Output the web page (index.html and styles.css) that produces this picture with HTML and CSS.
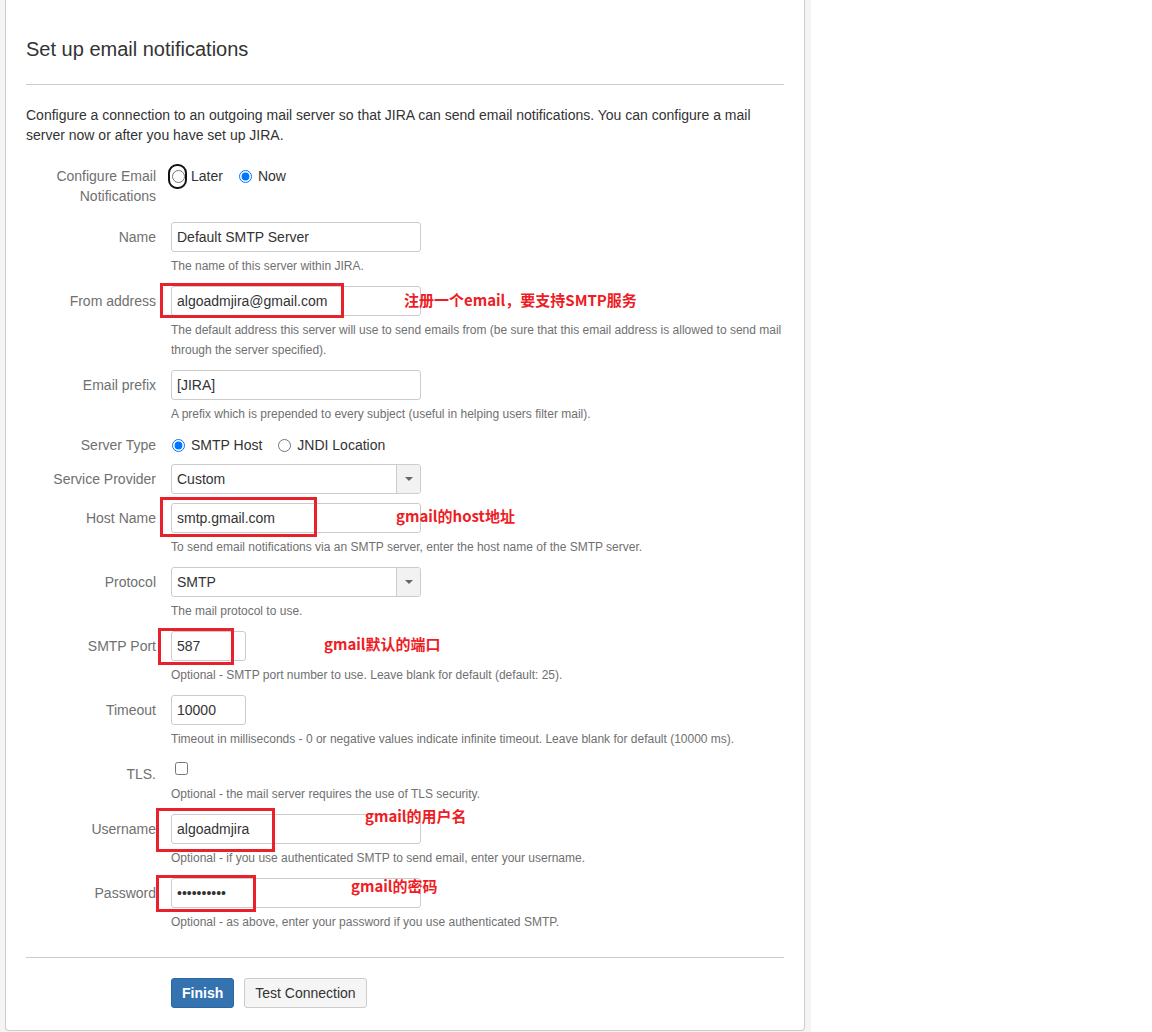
FILE: index.html
```html
<!DOCTYPE html>
<html lang="en">
<head>
<meta charset="utf-8">
<title>Set up email notifications</title>
<link rel="stylesheet" href="styles.css">
</head>
<body>
<div class="page">
  <div class="card">
    <h2 class="title">Set up email notifications</h2>
    <hr class="rule">
    <p class="intro">Configure a connection to an outgoing mail server so that JIRA can send email notifications. You can configure a mail server now or after you have set up JIRA.</p>

    <form class="form">
      <div class="row row-configure">
        <div class="lbl lbl-radio">Configure Email Notifications</div>
        <div class="field">
          <div class="radios">
            <label class="opt"><span class="focus-wrap"><input type="radio" name="cfg"><span class="focus-ring"></span></span>Later</label>
            <label class="opt"><input type="radio" name="cfg" checked>Now</label>
          </div>
        </div>
      </div>

      <div class="row">
        <div class="lbl">Name</div>
        <div class="field">
          <input class="text" type="text" value="Default SMTP Server">
          <div class="desc">The name of this server within JIRA.</div>
        </div>
      </div>

      <div class="row">
        <div class="lbl">From address</div>
        <div class="field">
          <input class="text" type="text" value="algoadmjira@gmail.com">
          <div class="desc">The default address this server will use to send emails from (be sure that this email address is allowed to send mail through the server specified).</div>
        </div>
      </div>

      <div class="row">
        <div class="lbl">Email prefix</div>
        <div class="field">
          <input class="text" type="text" value="[JIRA]">
          <div class="desc">A prefix which is prepended to every subject (useful in helping users filter mail).</div>
        </div>
      </div>

      <div class="row row-radio">
        <div class="lbl lbl-radio">Server Type</div>
        <div class="field">
          <div class="radios">
            <label class="opt"><input type="radio" name="stype" checked>SMTP Host</label>
            <label class="opt"><input type="radio" name="stype">JNDI Location</label>
          </div>
        </div>
      </div>

      <div class="row row-select">
        <div class="lbl">Service Provider</div>
        <div class="field">
          <div class="select"><span class="sel-text">Custom</span><span class="sel-arrow"><span class="caret"></span></span></div>
        </div>
      </div>

      <div class="row">
        <div class="lbl">Host Name</div>
        <div class="field">
          <input class="text" type="text" value="smtp.gmail.com">
          <div class="desc">To send email notifications via an SMTP server, enter the host name of the SMTP server.</div>
        </div>
      </div>

      <div class="row">
        <div class="lbl">Protocol</div>
        <div class="field">
          <div class="select"><span class="sel-text">SMTP</span><span class="sel-arrow"><span class="caret"></span></span></div>
          <div class="desc">The mail protocol to use.</div>
        </div>
      </div>

      <div class="row">
        <div class="lbl">SMTP Port</div>
        <div class="field">
          <input class="text short" type="text" value="587">
          <div class="desc">Optional - SMTP port number to use. Leave blank for default (default: 25).</div>
        </div>
      </div>

      <div class="row">
        <div class="lbl">Timeout</div>
        <div class="field">
          <input class="text short" type="text" value="10000">
          <div class="desc">Timeout in milliseconds - 0 or negative values indicate infinite timeout. Leave blank for default (10000 ms).</div>
        </div>
      </div>

      <div class="row">
        <div class="lbl">TLS.</div>
        <div class="field">
          <div class="check-wrap"><input class="check" type="checkbox"></div>
          <div class="desc">Optional - the mail server requires the use of TLS security.</div>
        </div>
      </div>

      <div class="row">
        <div class="lbl">Username</div>
        <div class="field">
          <input class="text" type="text" value="algoadmjira">
          <div class="desc">Optional - if you use authenticated SMTP to send email, enter your username.</div>
        </div>
      </div>

      <div class="row">
        <div class="lbl">Password</div>
        <div class="field">
          <input class="text" type="password" value="abcdefghij">
          <div class="desc">Optional - as above, enter your password if you use authenticated SMTP.</div>
        </div>
      </div>

      <hr class="rule rule-bottom">

      <div class="buttons">
        <button type="button" class="btn btn-primary">Finish</button>
        <button type="button" class="btn">Test Connection</button>
      </div>
    </form>

    <div class="mark mark-from"></div>
    <div class="mark mark-host"></div>
    <div class="mark mark-port"></div>
    <div class="mark mark-user"></div>
    <div class="mark mark-pass"></div>

    <div class="note note-from">注册一个email，要支持SMTP服务</div>
    <div class="note note-host">gmail的host地址</div>
    <div class="note note-port">gmail默认的端口</div>
    <div class="note note-user">gmail的用户名</div>
    <div class="note note-pass">gmail的密码</div>
  </div>
</div>
</body>
</html>
```

FILE: styles.css
```css
html, body {
  margin: 0;
  padding: 0;
  background: #ffffff;
}

body {
  font-family: "Liberation Sans", Arial, "Noto Sans CJK SC", sans-serif;
  font-size: 14px;
  line-height: 20px;
  color: #333333;
}

.page {
  width: 811px;
  height: 1032px;
  background: #f4f4f4;
  box-sizing: border-box;
  padding-left: 5px;
}

.card {
  position: relative;
  width: 800px;
  height: 1031px;
  box-sizing: border-box;
  background: #ffffff;
  border: 1px solid #cccccc;
  border-top: none;
  border-radius: 0 0 4px 4px;
  padding: 34px 20px 0 20px;
}

.title {
  margin: 0;
  font-size: 20px;
  font-weight: normal;
  line-height: 30px;
  color: #333333;
}

.rule {
  border: none;
  border-top: 1px solid #cccccc;
  margin: 20px 0 0 0;
  height: 0;
}

.intro {
  margin: 20px 0 0 0;
  padding-right: 20px;
}

.form {
  margin-top: 21px;
}

.row {
  display: grid;
  grid-template-columns: 130px 1fr;
  column-gap: 15px;
  margin-bottom: 10px;
}

.row-configure {
  margin-bottom: 16px;
}

.row-radio {
  padding-top: 1px;
  margin-bottom: 9px;
}

.row-select {
  margin-bottom: 9px;
}

.lbl {
  text-align: right;
  color: #707070;
  padding-top: 5px;
  line-height: 20px;
}

.lbl-radio {
  padding-top: 0;
}

.field {
  min-width: 0;
}

.radios {
  display: flex;
  align-items: center;
  height: 20px;
}

.opt {
  display: inline-flex;
  align-items: center;
  margin-right: 15px;
  color: #333333;
}

.opt input {
  margin: 0 6px 0 1px;
  width: 13px;
  height: 13px;
}

.focus-wrap {
  position: relative;
  display: inline-flex;
  align-items: center;
}

.focus-ring {
  position: absolute;
  left: -3px;
  top: -6px;
  width: 15px;
  height: 21px;
  border: 2px solid #111111;
  border-radius: 9px;
  pointer-events: none;
}

.text {
  display: block;
  width: 250px;
  height: 30px;
  box-sizing: border-box;
  border: 1px solid #cccccc;
  border-radius: 3px;
  padding: 0 5px;
  font-family: "Liberation Sans", Arial, sans-serif;
  font-size: 14px;
  color: #333333;
  background: #ffffff;
  margin: 0;
}

.text.short {
  width: 75px;
}

.desc {
  margin-top: 4px;
  font-size: 12px;
  line-height: 20px;
  color: #707070;
}

.select {
  display: flex;
  width: 250px;
  height: 30px;
  box-sizing: border-box;
  border: 1px solid #cccccc;
  border-radius: 3px;
  background: #ffffff;
  overflow: hidden;
}

.sel-text {
  flex: 1;
  padding: 0 5px;
  line-height: 28px;
  color: #333333;
}

.sel-arrow {
  width: 23px;
  border-left: 1px solid #cccccc;
  background: #f2f2f2;
  display: flex;
  align-items: center;
  justify-content: center;
}

.caret {
  width: 0;
  height: 0;
  border-left: 4px solid transparent;
  border-right: 4px solid transparent;
  border-top: 4px solid #666666;
}

.check-wrap {
  height: 21px;
}

.check {
  margin: 3px 0 0 4px;
  width: 13px;
  height: 13px;
}

.rule-bottom {
  margin-top: 25px;
}

.buttons {
  display: flex;
  gap: 10px;
  margin: 20px 0 0 145px;
}

.btn {
  height: 30px;
  box-sizing: border-box;
  border: 1px solid #cccccc;
  border-radius: 3px;
  background: #f5f5f5;
  color: #333333;
  font-family: "Liberation Sans", Arial, sans-serif;
  font-size: 14px;
  padding: 0 10px;
}

.btn-primary {
  background: #3572b0;
  border-color: #2a67a5;
  color: #ffffff;
  font-weight: bold;
}

.mark {
  position: absolute;
  border: 3px solid #e8212a;
  box-sizing: border-box;
}

.mark-from { left: 154px; top: 283px; width: 184px; height: 35px; }
.mark-host { left: 154px; top: 497px; width: 157px; height: 40px; }
.mark-port { left: 152px; top: 628px; width: 76px; height: 37px; }
.mark-user { left: 150px; top: 808px; width: 119px; height: 44px; }
.mark-pass { left: 150px; top: 875px; width: 100px; height: 37px; }

.note {
  position: absolute;
  font-family: "Noto Sans CJK SC", "Liberation Sans", sans-serif;
  font-weight: bold;
  font-size: 15px;
  line-height: 20px;
  color: #ee1c25;
  white-space: nowrap;
}

.note-from { left: 398px; top: 290px; }
.note-host { left: 390px; top: 506px; }
.note-port { left: 318px; top: 634px; }
.note-user { left: 359px; top: 806px; }
.note-pass { left: 345px; top: 876px; }
```
